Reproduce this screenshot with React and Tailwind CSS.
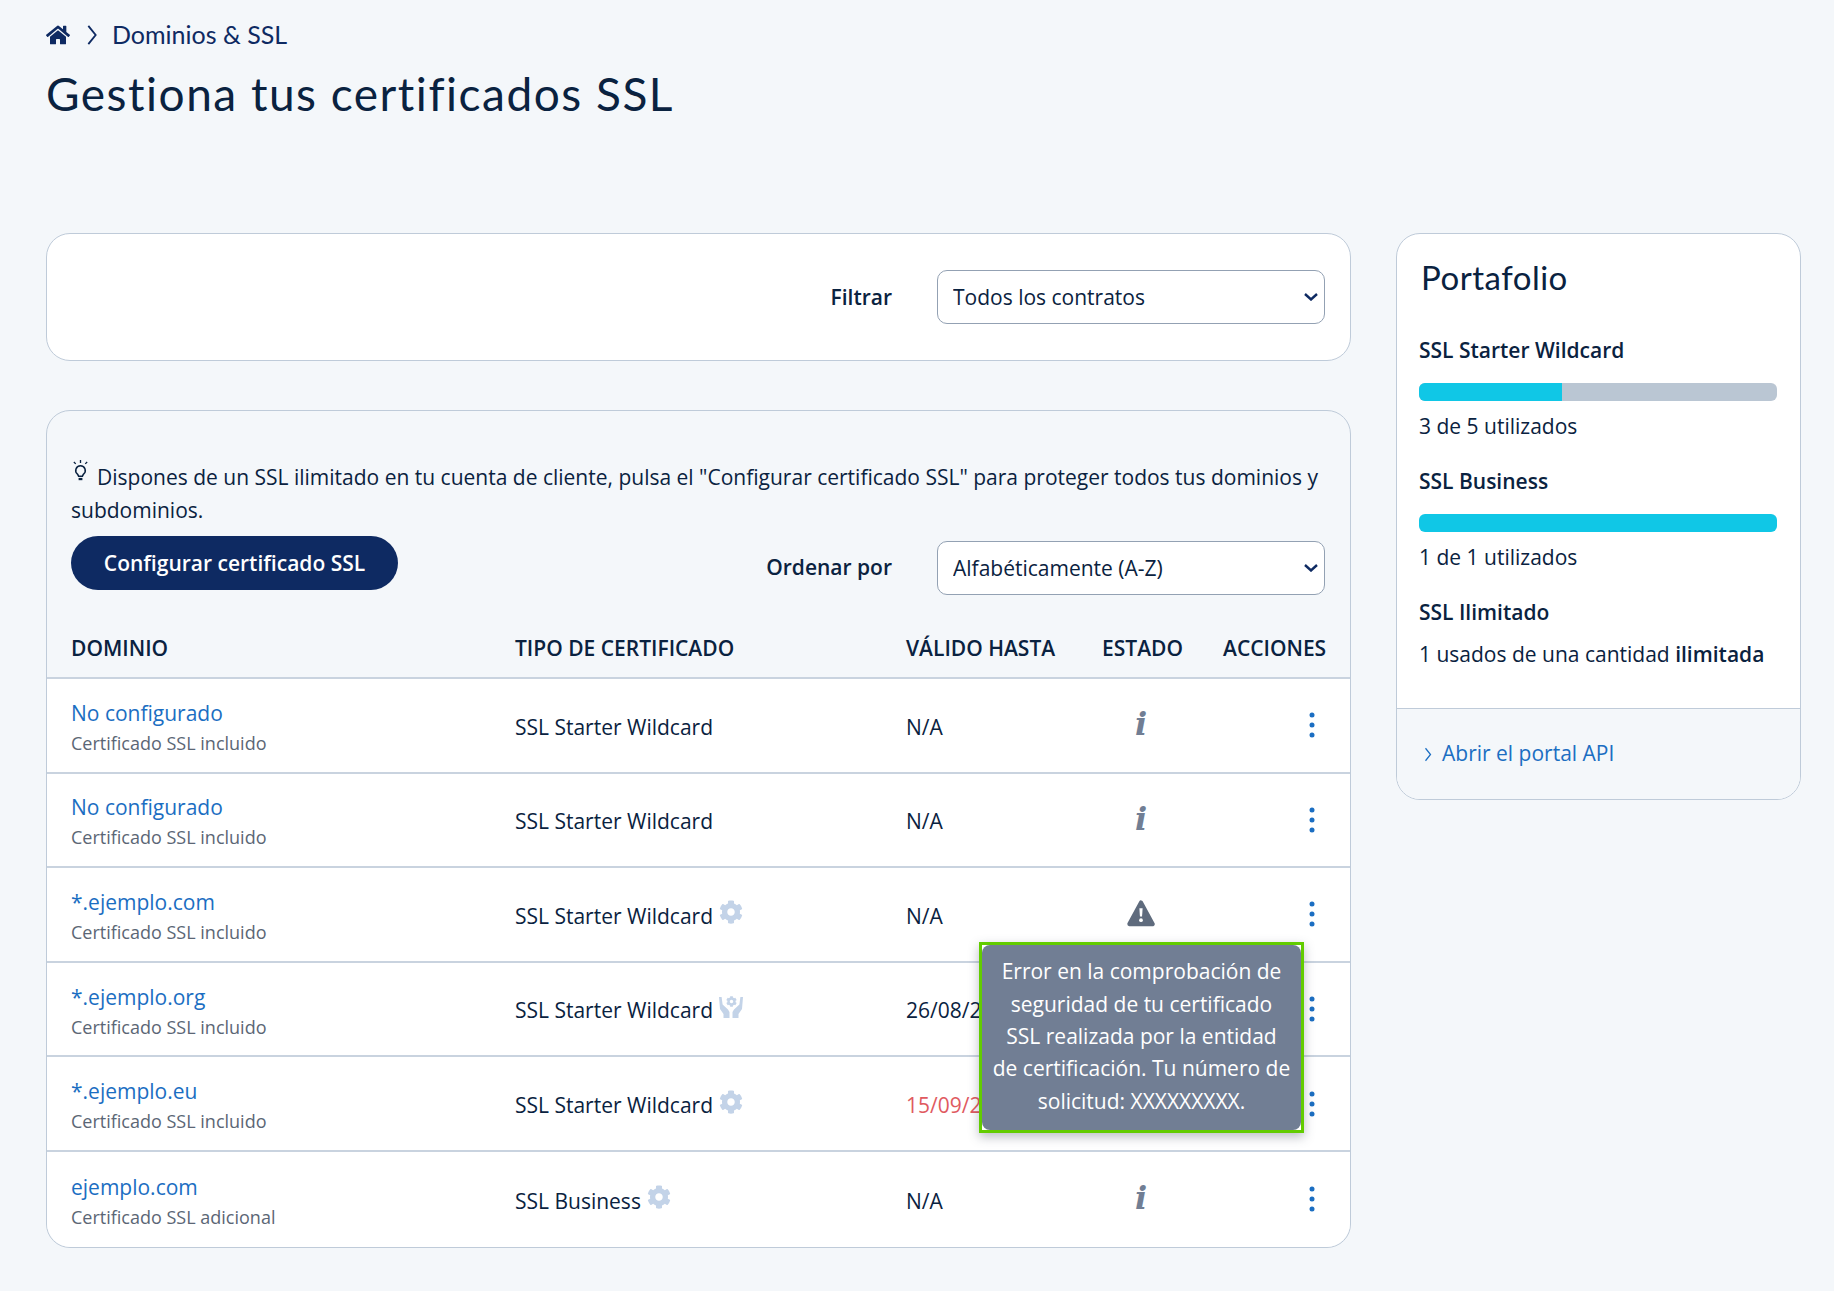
import React from "react";
import { FaHome, FaCog } from "react-icons/fa";

const font = "font-['Open_Sans','Noto_Sans',sans-serif]";
const head = "font-['Lato','Noto_Sans',sans-serif]";

function Chevron({ className }) {
  return (
    <svg viewBox="0 0 12 24" className={className} fill="none" stroke="currentColor" strokeWidth="2">
      <path d="M2 2l8 10-8 10" />
    </svg>
  );
}

function Bulb() {
  return (
    <svg viewBox="0 0 20 24" className="w-[19px] h-[23px] text-[#0a2240] inline-block align-[3px] mr-[7px]" fill="none" stroke="currentColor" strokeWidth="1.6">
      <path d="M10 7a5 5 0 0 0-3 9l1 2h4l1-2a5 5 0 0 0-3-9z" />
      <path d="M8 21h4" strokeWidth="2.4" />
      <path d="M10 1v3M3 3l2 2M17 3l-2 2" strokeWidth="1.4" />
    </svg>
  );
}

function Dots() {
  return (
    <svg viewBox="0 0 8 28" className="w-[8px] h-[28px] text-[#1b6ec2]" fill="currentColor">
      <circle cx="4" cy="4" r="2.5" />
      <circle cx="4" cy="14" r="2.5" />
      <circle cx="4" cy="24" r="2.5" />
    </svg>
  );
}

function Warn() {
  return (
    <svg viewBox="0 0 24 24" className="w-[28px] h-[28px]">
      <path d="M12 3L22 21.5H2z" fill="#5f6b7d" stroke="#5f6b7d" strokeWidth="3.5" strokeLinejoin="round" />
      <path d="M10.6 8h2.8l-.5 7h-1.8z" fill="#fff" />
      <circle cx="12" cy="18.2" r="1.6" fill="#fff" />
    </svg>
  );
}

function HandsGear() {
  return (
    <span className="relative block w-[24px] h-[22px] text-[#c3d3e8]">
      <FaCog className="absolute left-[6.5px] top-0 w-[11px] h-[11px]" />
      <svg viewBox="0 0 24 22" className="w-[24px] h-[22px]" fill="currentColor">
        <path d="M0 1h2.6l1 7.5L9 13.5l1.5 2.5v6H4.5v-4L1 13z" />
        <path d="M24 1h-2.6l-1 7.5L15 13.5 13.5 16v6h6v-4l3.5-5z" />
      </svg>
    </span>
  );
}

function Info() {
  return (
    <span className="font-['DejaVu_Serif',serif] font-bold italic text-[32px] leading-none text-[#717e94]">i</span>
  );
}

const rows = [
  { name: "No configurado", sub: "Certificado SSL incluido", type: "SSL Starter Wildcard", date: "N/A", status: "info" },
  { name: "No configurado", sub: "Certificado SSL incluido", type: "SSL Starter Wildcard", date: "N/A", status: "info" },
  { name: "*.ejemplo.com", sub: "Certificado SSL incluido", type: "SSL Starter Wildcard", badge: "gear", date: "N/A", status: "warn", tip: true },
  { name: "*.ejemplo.org", sub: "Certificado SSL incluido", type: "SSL Starter Wildcard", badge: "hands", date: "26/08/2024", status: "" },
  { name: "*.ejemplo.eu", sub: "Certificado SSL incluido", type: "SSL Starter Wildcard", badge: "gear", date: "15/09/2024", red: true, status: "" },
  { name: "ejemplo.com", sub: "Certificado SSL adicional", type: "SSL Business", badge: "gear", date: "N/A", status: "info" },
];

const cols = "grid grid-cols-[444px_391px_196px_121px_1fr] pl-[24px] pr-[25px]";

function Row({ r, last }) {
  return (
    <div className={`${cols} h-[94.6px] items-center bg-white ${last ? "rounded-b-[24px]" : "border-b-2 border-[#c9d3df]"}`}>
      <div className="flex flex-col mt-[3px]">
        <a className="text-[21px] leading-[30px] text-[#1b6ec2]">{r.name}</a>
        <span className="text-[18px] leading-[26px] text-[#5b6675] mt-[2px]">{r.sub}</span>
      </div>
      <div className="flex items-center text-[#0a2240] text-[21px] mt-[4px]">
        <span>{r.type}</span>
        {r.badge === "gear" && <FaCog className="ml-[6px] mb-[8px] w-[24px] h-[24px] text-[#c3d3e8]" />}
        {r.badge === "hands" && <span className="ml-[6px] mb-[8px]"><HandsGear /></span>}
      </div>
      <div className={`text-[21px] mt-[4px] ${r.red ? "text-[#e05a5f]" : "text-[#0a2240]"}`}>{r.date}</div>
      <div className="relative flex justify-center w-[78px] mb-[2px]">
        {r.status === "info" && <Info />}
        {r.status === "warn" && <Warn />}
        {r.tip && (
          <div className="absolute top-[43px] left-[-123px] w-[325px] h-[191px] z-10 border-[3px] border-[#62cc00] bg-white shadow-[0_4px_10px_rgba(60,70,90,0.35)]">
            <div className="h-full rounded-[8px] bg-[#717e94] text-white text-center text-[21px] leading-[32.3px] px-[9px] pt-[10px]">
              Error en la comprobación de<br />seguridad de tu certificado<br />SSL realizada por la entidad<br />de certificación. Tu número de<br />solicitud: XXXXXXXXX.
            </div>
          </div>
        )}
      </div>
      <div className="flex justify-end pr-[9px]"><Dots /></div>
    </div>
  );
}

function Sel({ children }) {
  return (
    <div className="relative w-[388px] h-[54px]">
      <select className="appearance-none w-full h-full rounded-[10px] border border-[#93a1b3] bg-white pl-[15px] pr-[30px] pt-[2px] text-[21px] text-[#0a2240]">
        <option>{children}</option>
      </select>
      <svg viewBox="0 0 14 8" className="absolute right-[7px] top-[23px] w-[14px] h-[8px] text-[#0e2a62] pointer-events-none" fill="none" stroke="currentColor" strokeWidth="2.4">
        <path d="M1 1l6 5.5L13 1" />
      </svg>
    </div>
  );
}

function Usage({ title, pct, text }) {
  return (
    <div>
      <div className="text-[21px] leading-[28px] font-semibold text-[#0a2240]">{title}</div>
      <div className="mt-[19px] h-[18px] rounded-[6px] bg-[#bac6d3] overflow-hidden">
        <div className="h-full bg-[#10c7e6]" style={{ width: pct + "%" }} />
      </div>
      <div className="mt-[11px] text-[21px] leading-[28px] text-[#0a2240]">{text}</div>
    </div>
  );
}

export default function App() {
  return (
    <div className={`${font} min-h-[1291px] bg-[#f4f7fa] pl-[46px] pr-[33px] pt-[17px]`}>
      <div className="flex items-center h-[36px] text-[#0e2a62]">
        <FaHome className="w-[24px] h-[22px]" />
        <Chevron className="ml-[16px] w-[12px] h-[22px]" />
        <span className={`${head} ml-[14px] text-[25px]`}>Dominios &amp; SSL</span>
      </div>
      <h1 className={`${head} mt-[11px] text-[46px] leading-[60px] tracking-[1.5px] text-[#0a2240]`}>Gestiona tus certificados SSL</h1>

      <div className="mt-[109px] grid grid-cols-[1305px_405px] gap-[45px] items-start">
        <div>
          <div className="h-[128px] rounded-[24px] border border-[#bfcbd9] bg-white flex items-center justify-end gap-[45px] pr-[25px]">
            <span className="text-[21px] font-semibold text-[#0a2240] mt-[2px]">Filtrar</span>
            <Sel>Todos los contratos</Sel>
          </div>

          <div className="mt-[49px] rounded-[24px] border border-[#bfcbd9]">
            <div className="pl-[24px] pr-[24px] pt-[48px] text-[21px] leading-[33px] text-[#0a2240]">
              <Bulb />Dispones de un SSL ilimitado en tu cuenta de cliente, pulsa el "Configurar certificado SSL" para proteger todos tus dominios y subdominios.
            </div>
            <div className="pl-[24px] pr-[25px] mt-[9px] flex items-start justify-between">
              <button className="h-[54px] w-[327px] rounded-[27px] bg-[#0e2a62] text-white text-[21px] font-semibold pt-[2px]">Configurar certificado SSL</button>
              <div className="flex items-center gap-[45px] mt-[5px]">
                <span className="text-[21px] font-semibold text-[#0a2240]">Ordenar por</span>
                <Sel>Alfabéticamente (A-Z)</Sel>
              </div>
            </div>
            <div className={`${cols} h-[84px] items-end pb-[14px] border-b-2 border-[#c9d3df] text-[21px] font-semibold text-[#0a2240] leading-[30px]`}>
              <div>DOMINIO</div>
              <div>TIPO DE CERTIFICADO</div>
              <div>VÁLIDO HASTA</div>
              <div>ESTADO</div>
              <div className="text-right">ACCIONES</div>
            </div>
            {rows.map((r, i) => <Row key={i} r={r} last={i === rows.length - 1} />)}
          </div>
        </div>

        <div className="rounded-[24px] border border-[#bfcbd9] bg-white overflow-hidden">
          <div className="pl-[22px] pr-[23px] pt-[19px] pb-[40px]">
            <h2 className={`${head} text-[33px] leading-[48px] pl-[2px] tracking-[0.5px] text-[#0a2240]`}>Portafolio</h2>
            <div className="mt-[35px] flex flex-col gap-[27px]">
              <Usage title="SSL Starter Wildcard" pct={40} text="3 de 5 utilizados" />
              <Usage title="SSL Business" pct={100} text="1 de 1 utilizados" />
              <div>
                <div className="text-[21px] leading-[28px] font-semibold text-[#0a2240]">SSL Ilimitado</div>
                <div className="mt-[14px] text-[21px] leading-[28px] text-[#0a2240]">1 usados de una cantidad <span className="font-semibold">ilimitada</span></div>
              </div>
            </div>
          </div>
          <div className="border-t border-[#bfcbd9] bg-[#f4f7fa] h-[91px] flex items-center pl-[27px] text-[21px] text-[#1b6ec2]">
            <Chevron className="w-[8px] h-[15px] mr-[10px]" />
            Abrir el portal API
          </div>
        </div>
      </div>
    </div>
  );
}
